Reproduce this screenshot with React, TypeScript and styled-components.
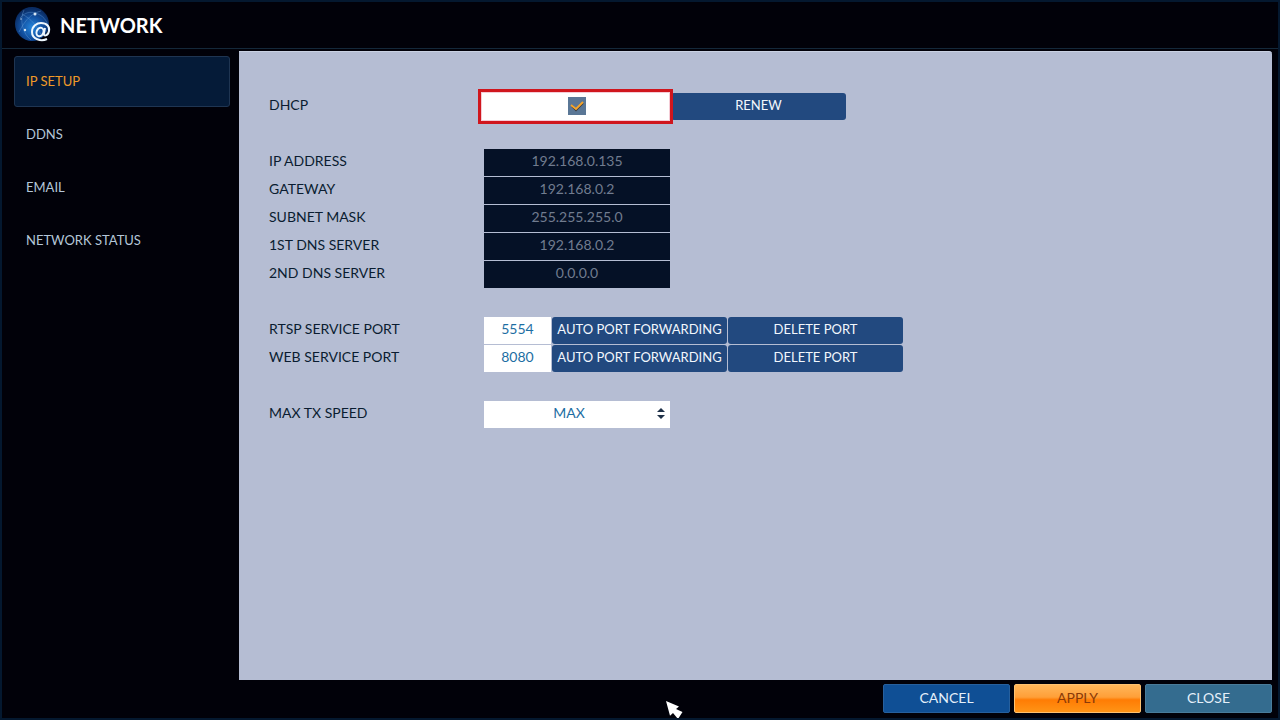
import React from "react";
import styled, { createGlobalStyle, css } from "styled-components";

const GlobalStyle = createGlobalStyle`
  *, *::before, *::after { box-sizing: border-box; }
  body { margin: 0; background: #010109; }
  body, button, input, select { font-family: Lato, Carlito, sans-serif; font-size: 14px; line-height: 20px; }
`;

const Screen = styled.div`
  position: relative;
  display: flex;
  flex-direction: column;
  min-height: 100vh;
  background: #010109;
  border: 2px solid #04182f;
  overflow: hidden;
`;

const Header = styled.header`
  display: flex;
  align-items: center;
  gap: 8px;
  height: 47px;
  padding-left: 12px;
  border-bottom: 1px solid #14283a;
`;

const Title = styled.h1`
  margin: 0;
  color: #fff;
  font-size: 20px;
  line-height: 28px;
  font-weight: 700;
`;

const Body = styled.div`
  flex: 1;
  display: flex;
  padding: 2px 6px 0 12px;
`;

const Sidebar = styled.nav`
  display: flex;
  flex-direction: column;
  flex: 0 0 216px;
  gap: 2px;
  padding-top: 5px;
  margin-right: 9px;
`;

const NavLink = styled.a<{ $active?: boolean }>`
  display: flex;
  align-items: center;
  height: 51px;
  padding: 0 11px 2px;
  border: 1px solid transparent;
  border-radius: 3px;
  color: #b4c6d8;
  font-size: 13px;
  text-decoration: none;
  ${(p) =>
    p.$active &&
    css`
      color: #f09a28;
      background: #051b38;
      border-color: #1f3552;
    `}
`;

const Panel = styled.main`
  flex: 1;
  padding: 41px 30px;
  background: #b5bdd3;
  border-top: 1px solid #c9d1e2;
  border-radius: 0 3px 0 0;
`;

const Form = styled.form`
  display: flex;
  flex-direction: column;
  gap: 29px;
`;

const Group = styled.div`
  display: flex;
  flex-direction: column;
  gap: 1px;
`;

const Row = styled.div`
  display: flex;
  gap: 1px;
  height: 27px;
`;

const Label = styled.label`
  flex: 0 0 214px;
  padding-top: 2px;
  color: #0a1c30;
`;

const Field = styled.input<{ $narrow?: boolean }>`
  width: ${(p) => (p.$narrow ? 67 : 186)}px;
  padding: 0 0 3px;
  border: 0;
  border-radius: 0;
  text-align: center;
  color: #1d6ea3;
  background: #fff;
  &:disabled {
    color: #717c8f;
    background: #051126;
  }
`;

const CheckCell = styled.div`
  position: relative;
  display: flex;
  align-items: center;
  justify-content: center;
  width: 186px;
  padding-bottom: 2px;
  background: #fff;
`;

const Highlight = styled.div`
  position: absolute;
  inset: -4px -3px -4px -6px;
  border: 3px solid #d0161d;
  background: #fff;
  box-shadow: inset 0 0 0 1px #f5ccd6;
`;

const CheckBox = styled.span`
  position: relative;
  display: flex;
  width: 18px;
  height: 18px;
  input {
    appearance: none;
    width: 18px;
    height: 18px;
    margin: 0;
    background: #5a7796;
  }
  svg {
    position: absolute;
    inset: 0;
    pointer-events: none;
    visibility: hidden;
  }
  input:checked + svg { visibility: visible; }
`;

const ActionButton = styled.button`
  width: 175px;
  padding: 0 0 3px;
  border: 0;
  border-radius: 3px;
  color: #f2f7fd;
  background: #22497f;
  font-size: 13px;
  white-space: nowrap;
`;

const SelectBox = styled.div`
  position: relative;
  display: flex;
  width: 186px;
  select {
    appearance: none;
    width: 100%;
    padding: 0 16px 3px 0;
    border: 0;
    border-radius: 0;
    color: #1d6ea3;
    background: #fff;
    text-align: center;
    text-align-last: center;
  }
  svg {
    position: absolute;
    right: 4px;
    top: 6px;
    pointer-events: none;
  }
`;

const Footer = styled.footer`
  display: flex;
  justify-content: flex-end;
  gap: 4px;
  padding: 4px 6px 5px;
`;

const tones = {
  blue: css`
    color: #e4f0fa;
    background: #0f4f95;
    border-color: #27609d;
  `,
  orange: css`
    color: #8a3a08;
    background: linear-gradient(#ffb65a 0%, #ff9f38 45%, #ff7c04 55%, #ff9416 100%);
    border-color: #ffc270;
  `,
  teal: css`
    color: #e4f0fa;
    background: #346c8f;
    border-color: #4a7c9a;
  `,
};

const FooterButton = styled.button<{ $tone: keyof typeof tones }>`
  width: 127px;
  height: 29px;
  padding: 0 0 2px;
  border: 1px solid;
  border-radius: 2px;
  ${(p) => tones[p.$tone]}
`;

const Pointer = styled.svg`
  position: absolute;
  left: 663px;
  top: 698px;
`;

const GlobeIcon = () => (
  <svg width="38" height="38" viewBox="0 0 38 38" aria-hidden="true">
    <defs>
      <radialGradient id="globe" cx="50%" cy="60%" r="55%">
        <stop offset="0" stopColor="#2585dc" />
        <stop offset="0.6" stopColor="#114f9f" />
        <stop offset="1" stopColor="#0a2c63" />
      </radialGradient>
    </defs>
    <circle cx="18" cy="18" r="17" fill="url(#globe)" />
    <g fill="none" stroke="#6fa5dc" strokeWidth="0.8" opacity="0.45">
      <path d="M6 12C12 5 19 5 26 9S34 20 34 20M10 4C5 14 9 28 17 34M5 26C12 12 19 7 27 5M8 8C17 13 24 20 28 31" />
    </g>
    <g fill="#d9e8f5">
      <circle cx="21" cy="8" r="1.5" />
      <circle cx="11" cy="24" r="1.2" />
      <circle cx="7" cy="13" r="0.7" />
    </g>
    <g fill="none" stroke="#eef7fe" strokeWidth="2">
      <path d="M33 33C27 36 18 33 18 26C18 20 23 17 27 17C33 17 36 21 35 25C34 30 29 31 30 27L31 22" />
      <ellipse cx="26" cy="26" rx="3.4" ry="4.4" transform="rotate(20 26 26)" />
    </g>
  </svg>
);

const navItems = ["IP SETUP", "DDNS", "EMAIL", "NETWORK STATUS"];

const addresses = [
  ["ip", "IP ADDRESS", "192.168.0.135"],
  ["gateway", "GATEWAY", "192.168.0.2"],
  ["mask", "SUBNET MASK", "255.255.255.0"],
  ["dns1", "1ST DNS SERVER", "192.168.0.2"],
  ["dns2", "2ND DNS SERVER", "0.0.0.0"],
];

const ports = [
  ["rtsp", "RTSP SERVICE PORT", "5554"],
  ["web", "WEB SERVICE PORT", "8080"],
];

export default function App() {
  return (
    <Screen>
      <GlobalStyle />
      <Header>
        <GlobeIcon />
        <Title>NETWORK</Title>
      </Header>
      <Body>
        <Sidebar>
          {navItems.map((item, i) => (
            <NavLink key={item} href="#" $active={i === 0}>
              {item}
            </NavLink>
          ))}
        </Sidebar>
        <Panel>
          <Form onSubmit={(e) => e.preventDefault()}>
            <Row>
              <Label htmlFor="dhcp">DHCP</Label>
              <CheckCell>
                <Highlight />
                <CheckBox>
                  <input id="dhcp" type="checkbox" defaultChecked />
                  <svg width="18" height="18" viewBox="0 0 18 18">
                    <path d="M4 9L8 13L15 6" fill="none" stroke="#3b3a3c" strokeWidth="2" />
                    <path d="M3 8L8 12L15 5" fill="none" stroke="#f5a52b" strokeWidth="2" />
                  </svg>
                </CheckBox>
              </CheckCell>
              <ActionButton type="button">RENEW</ActionButton>
            </Row>
            <Group>
              {addresses.map(([id, label, value]) => (
                <Row key={id}>
                  <Label htmlFor={id}>{label}</Label>
                  <Field id={id} defaultValue={value} disabled />
                </Row>
              ))}
            </Group>
            <Group>
              {ports.map(([id, label, value]) => (
                <Row key={id}>
                  <Label htmlFor={id}>{label}</Label>
                  <Field id={id} defaultValue={value} $narrow />
                  <ActionButton type="button">AUTO PORT FORWARDING</ActionButton>
                  <ActionButton type="button">DELETE PORT</ActionButton>
                </Row>
              ))}
            </Group>
            <Row>
              <Label htmlFor="speed">MAX TX SPEED</Label>
              <SelectBox>
                <select id="speed" defaultValue="MAX">
                  <option>MAX</option>
                </select>
                <svg width="10" height="13" viewBox="0 0 10 13" fill="#1f3148">
                  <path d="M1 5L5 1L9 5ZM1 8H9L5 12Z" />
                </svg>
              </SelectBox>
            </Row>
          </Form>
        </Panel>
      </Body>
      <Footer>
        <FooterButton type="button" $tone="blue">CANCEL</FooterButton>
        <FooterButton type="button" $tone="orange">APPLY</FooterButton>
        <FooterButton type="button" $tone="teal">CLOSE</FooterButton>
      </Footer>
      <Pointer width="20" height="20" viewBox="0 0 20 20" aria-hidden="true">
        <path d="M1 1L14 6.5L11 9L17.5 12L13 19L8 13L5 15.7Z" fill="#fff" />
      </Pointer>
    </Screen>
  );
}
